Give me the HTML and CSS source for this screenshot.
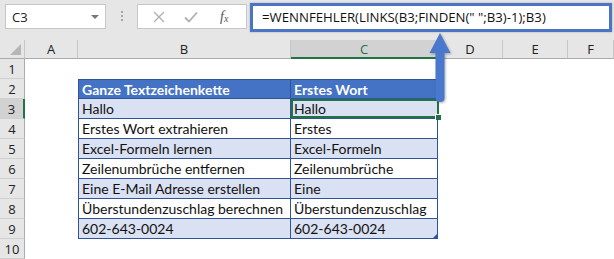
FILE: index.html
```html
<!DOCTYPE html>
<html lang="de">
<head>
<meta charset="UTF-8">
<title>WENNFEHLER erstes Wort</title>
<link rel="stylesheet" href="styles.css">
</head>
<body>
<div class="excel">
  <div class="toolbar">
    <div class="namebox"><span>C3</span><span class="caret"></span></div>
    <div class="grip"><i></i><i></i><i></i></div>
    <div class="fxbox">
      <svg class="ico" width="12" height="12" viewBox="0 0 12 12"><path d="M1 1 L11 11 M11 1 L1 11" stroke="#b0b0b0" stroke-width="1.4" fill="none"/></svg>
      <svg class="ico" width="14" height="12" viewBox="0 0 14 12"><path d="M1 6.5 L5 10.5 L13 1.5" stroke="#b0b0b0" stroke-width="1.8" fill="none"/></svg>
      <span class="fx">f<sub>x</sub></span>
    </div>
    <div class="formula">=WENNFEHLER(LINKS(B3;FINDEN(" ";B3)-1);B3)</div>
  </div>

  <div class="sheet">
    <div class="hd corner"><span class="tri"></span></div>
    <div class="hd col">A</div>
    <div class="hd col">B</div>
    <div class="hd col sel">C</div>
    <div class="hd col">D</div>
    <div class="hd col">E</div>
    <div class="hd col">F</div>

    <div class="hd row">1</div>
    <div></div><div></div><div></div><div></div><div></div><div></div>

    <div class="hd row">2</div>
    <div></div>
    <div class="t b th">Ganze Textzeichenkette</div>
    <div class="t c th">Erstes Wort</div>
    <div></div><div></div><div></div>

    <div class="hd row sel">3</div>
    <div></div>
    <div class="t b band">Hallo</div>
    <div class="t c band active">Hallo<span class="handle"></span></div>
    <div></div><div></div><div></div>

    <div class="hd row">4</div>
    <div></div>
    <div class="t b">Erstes Wort extrahieren</div>
    <div class="t c">Erstes</div>
    <div></div><div></div><div></div>

    <div class="hd row">5</div>
    <div></div>
    <div class="t b band">Excel-Formeln lernen</div>
    <div class="t c band">Excel-Formeln</div>
    <div></div><div></div><div></div>

    <div class="hd row">6</div>
    <div></div>
    <div class="t b">Zeilenumbrüche entfernen</div>
    <div class="t c">Zeilenumbrüche</div>
    <div></div><div></div><div></div>

    <div class="hd row">7</div>
    <div></div>
    <div class="t b band">Eine E-Mail Adresse erstellen</div>
    <div class="t c band">Eine</div>
    <div></div><div></div><div></div>

    <div class="hd row">8</div>
    <div></div>
    <div class="t b">Überstundenzuschlag berechnen</div>
    <div class="t c">Überstundenzuschlag</div>
    <div></div><div></div><div></div>

    <div class="hd row">9</div>
    <div></div>
    <div class="t b band">602-643-0024</div>
    <div class="t c band last">602-643-0024</div>
    <div></div><div></div><div></div>

    <div class="hd row">10</div>
    <div></div><div></div><div></div><div></div><div></div><div></div>
  </div>

  <!-- Pfeil von C3 zur Bearbeitungsleiste -->
  <svg class="arrow" width="30" height="80" viewBox="0 0 30 80">
    <path d="M15 2 L25.5 22 L19.5 22 L19.5 67 Q19.5 71 15 71 Q10.5 71 10.5 67 L10.5 22 L4.5 22 Z" fill="#4a78cc"/>
  </svg>
</div>
</body>
</html>
```
FILE: styles.css
```css
body { margin: 0; background: #fff; }
.excel { position: relative; width: 614px; height: 259px; overflow: hidden; font-family: "Open Sans", "Liberation Sans", sans-serif; }

.toolbar { height: 40px; background: #e6e6e6; display: flex; align-items: flex-start; padding: 3px 0 0 5px; box-sizing: border-box; }
.namebox { margin-top: 1px; width: 101px; height: 25px; box-sizing: border-box; background: #fff; border: 1px solid #c6c6c6; display: flex; align-items: center; justify-content: space-between; padding: 0 6px 0 6px; font-size: 13px; color: #222; }
.caret { width: 0; height: 0; border-left: 4px solid transparent; border-right: 4px solid transparent; border-top: 4px solid #777; }
.grip { width: 31px; height: 26px; display: flex; flex-direction: column; align-items: center; justify-content: center; gap: 2px; }
.grip i { width: 2px; height: 2px; background: #a8a8a8; }
.fxbox { margin-top: 1px; width: 110px; height: 25px; box-sizing: border-box; background: #fff; border: 1px solid #c6c6c6; display: flex; align-items: center; padding: 0 0 0 15px; gap: 19px; }
.fx { font-family: "Liberation Serif", serif; font-style: italic; font-size: 14px; color: #555; margin-left: 3px; }
.fx sub { font-size: 10px; vertical-align: -1px; }
.formula { margin-left: 3px; width: 362px; height: 29px; box-sizing: border-box; background: #fff; border: 3px solid #4a74c4; font-size: 13.2px; color: #111; padding: 0 0 0 9px; line-height: 22px; box-shadow: 0 0 2px rgba(0,0,0,.25); }

.sheet { display: grid; grid-template-columns: 25px 53px 213px 147px 65px 65px 46px; grid-template-rows: 19px repeat(10, 20px); }
.sheet > div { box-sizing: border-box; }
.hd { background: #e6e6e6; color: #222; font-size: 13px; display: flex; align-items: center; justify-content: center; }
.col { border-right: 1px solid #c6c6c6; border-bottom: 1px solid #ababab; }
.row { border-right: 1px solid #ababab; border-bottom: 1px solid #d0d0d0; }
.corner { border-right: 1px solid #c6c6c6; border-bottom: 1px solid #ababab; justify-content: flex-end; align-items: flex-end; padding: 0 3px 3px 0; }
.tri { width: 0; height: 0; border-left: 11px solid transparent; border-bottom: 11px solid #b6b6b6; }
.col.sel { background: #d2d2d2; color: #217346; border-bottom: 2px solid #217346; }
.row.sel { background: #d2d2d2; border-right: 2px solid #217346; }

.t { font-family: Lato, "Liberation Sans", sans-serif; font-size: 14px; color: #111; line-height: 20px; padding-left: 3px; white-space: nowrap; border-bottom: 1px solid #2f5597; border-right: 1px solid #2f5597; position: relative; }
.b { border-left: 1px solid #2f5597; }
.th { background: #4472c4; color: #fff; font-weight: bold; border-top: 1px solid #2f5597; }
.band { background: #d9e1f2; }
.active { box-shadow: inset 0 0 0 2px #217346; border-right: none; margin-right: -1px; }
.handle { position: absolute; right: -3px; bottom: -3px; width: 5px; height: 5px; background: #217346; border: 1px solid #fff; }
.last::after { content: ""; position: absolute; right: 0; bottom: 0; border-left: 4px solid transparent; border-bottom: 4px solid #2f5597; }

.arrow { position: absolute; left: 425px; top: 31px; filter: drop-shadow(1px 1px 1px rgba(0,0,0,.3)); }
```
